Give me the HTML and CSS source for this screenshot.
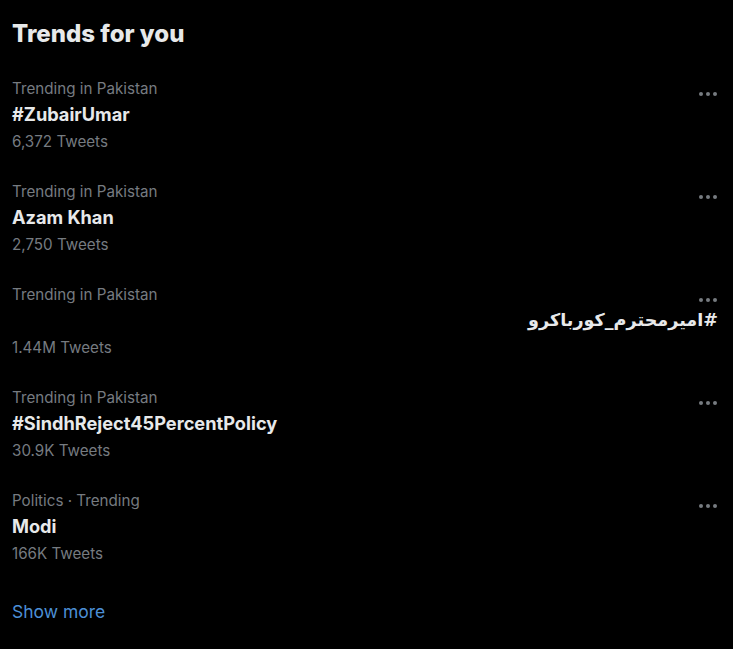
FILE: index.html
```html
<!DOCTYPE html>
<html>
<head>
<meta charset="utf-8">
<link rel="stylesheet" href="styles.css">
</head>
<body>
<div class="panel">
  <h2 class="heading">Trends for you</h2>
  <div class="trend">
    <div class="top"><span class="meta">Trending in Pakistan</span><svg class="more" width="20" height="20" viewBox="0 0 20 20"><circle cx="3" cy="15" r="2"/><circle cx="10" cy="15" r="2"/><circle cx="17" cy="15" r="2"/></svg></div>
    <div class="name">#ZubairUmar</div>
    <div class="count">6,372 Tweets</div>
  </div>
  <div class="trend">
    <div class="top"><span class="meta">Trending in Pakistan</span><svg class="more" width="20" height="20" viewBox="0 0 20 20"><circle cx="3" cy="15" r="2"/><circle cx="10" cy="15" r="2"/><circle cx="17" cy="15" r="2"/></svg></div>
    <div class="name">Azam Khan</div>
    <div class="count">2,750 Tweets</div>
  </div>
  <div class="trend">
    <div class="top"><span class="meta">Trending in Pakistan</span><svg class="more" width="20" height="20" viewBox="0 0 20 20"><circle cx="3" cy="15" r="2"/><circle cx="10" cy="15" r="2"/><circle cx="17" cy="15" r="2"/></svg></div>
    <div class="name rtl" dir="rtl">#امیرمحترم_کورباکرو</div>
    <div class="count">1.44M Tweets</div>
  </div>
  <div class="trend">
    <div class="top"><span class="meta">Trending in Pakistan</span><svg class="more" width="20" height="20" viewBox="0 0 20 20"><circle cx="3" cy="15" r="2"/><circle cx="10" cy="15" r="2"/><circle cx="17" cy="15" r="2"/></svg></div>
    <div class="name">#SindhReject45PercentPolicy</div>
    <div class="count">30.9K Tweets</div>
  </div>
  <div class="trend">
    <div class="top"><span class="meta">Politics · Trending</span><svg class="more" width="20" height="20" viewBox="0 0 20 20"><circle cx="3" cy="15" r="2"/><circle cx="10" cy="15" r="2"/><circle cx="17" cy="15" r="2"/></svg></div>
    <div class="name">Modi</div>
    <div class="count">166K Tweets</div>
  </div>
  <div class="show">Show more</div>
</div>
</body>
</html>
```
FILE: styles.css
```css
html, body {
  margin: 0;
  padding: 0;
  background: #000;
}
body {
  font-family: Inter, "DejaVu Sans", sans-serif;
  color: #e7e9ea;
}
.panel {
  width: 733px;
  height: 649px;
  background: #000;
}
.heading {
  margin: 0;
  padding: 20px 12px 17px;
  font-size: 24px;
  line-height: 28px;
  font-weight: 800;
  color: #e7e9ea;
}
.trend {
  display: flex;
  flex-direction: column;
  padding: 14px 15px 15px 12px;
}
.top {
  display: flex;
  justify-content: space-between;
  align-items: flex-start;
  height: 20px;
}
.meta {
  font-size: 15.2px;
  line-height: 20px;
  color: #767b80;
}
.more {
  fill: #767b80;
  overflow: visible;
}
.name {
  font-size: 18.2px;
  line-height: 31px;
  padding-bottom: 1px;
  font-weight: 700;
  color: #e7e9ea;
}
.rtl {
  text-align: right;
  font-size: 17.6px;
  font-family: "DejaVu Sans", sans-serif;
}
.count {
  font-size: 15.2px;
  line-height: 22px;
  color: #767b80;
}
.show {
  padding: 21px 12px 0;
  font-size: 17.5px;
  line-height: 22px;
  color: #4c8fd6;
}
```
